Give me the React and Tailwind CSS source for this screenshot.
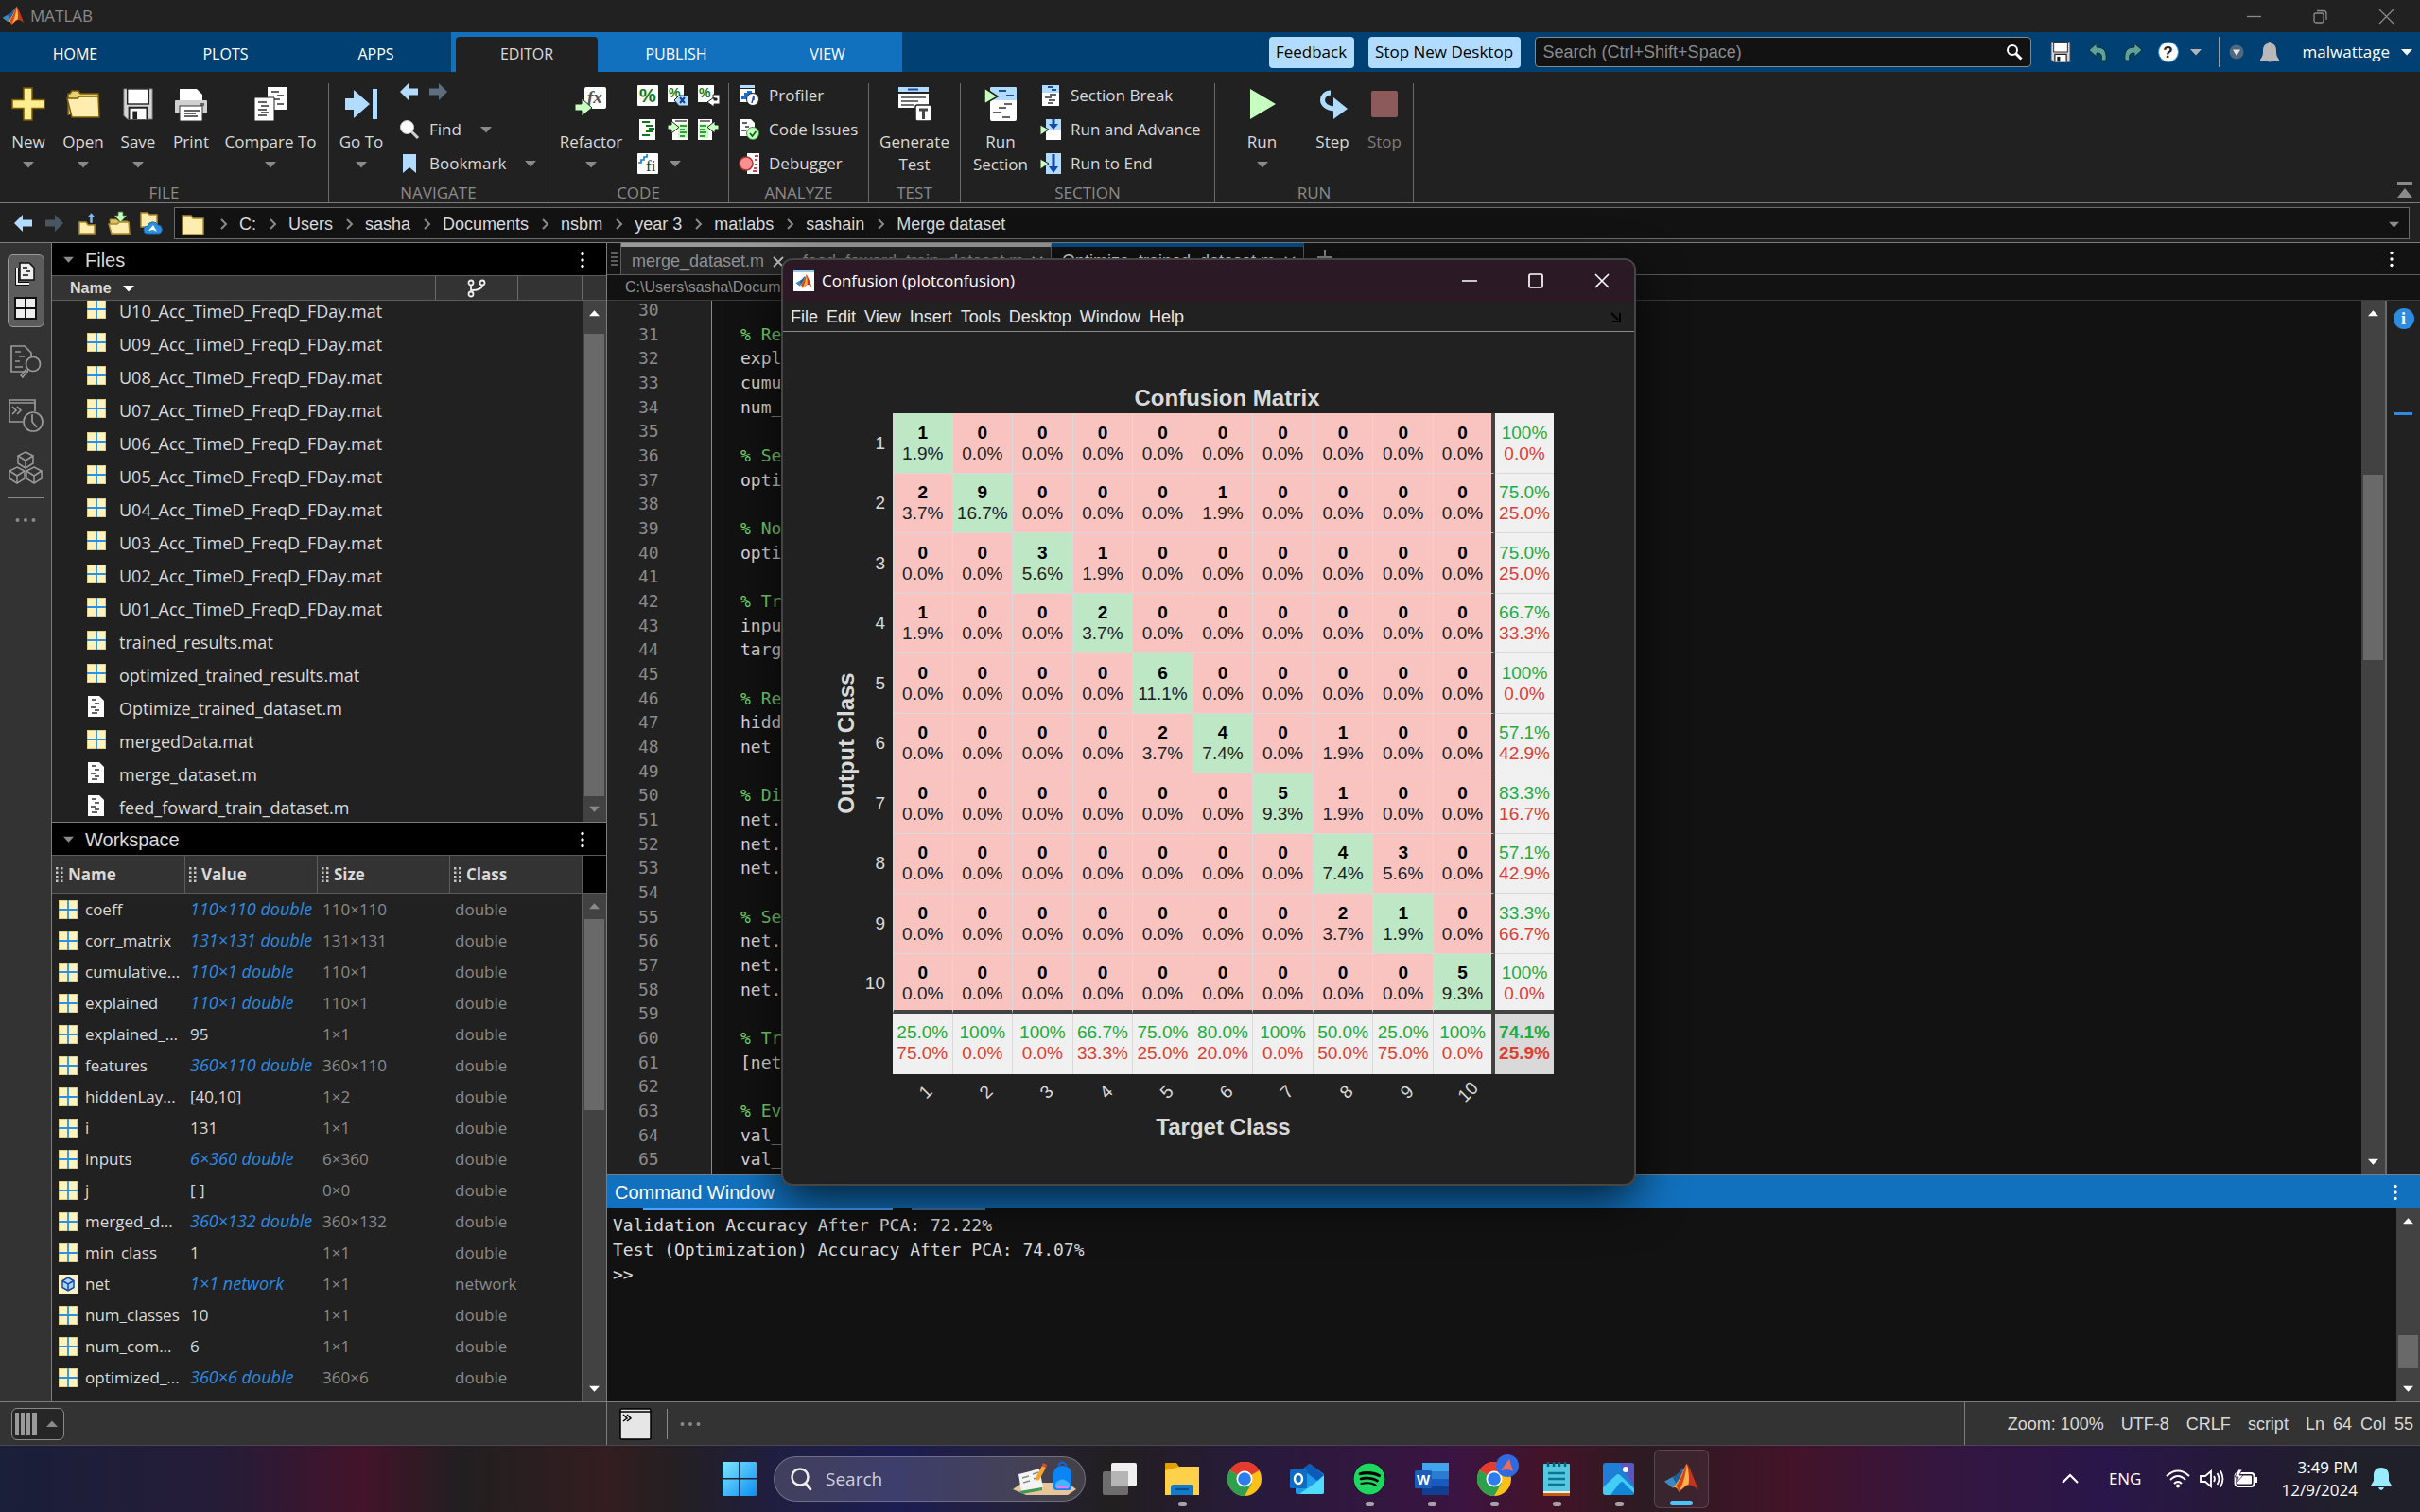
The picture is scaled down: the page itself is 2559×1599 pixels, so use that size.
import React from "react";
import { FaSpotify } from "react-icons/fa";

const FILES = [
  "U10_Acc_TimeD_FreqD_FDay.mat",
  "U09_Acc_TimeD_FreqD_FDay.mat",
  "U08_Acc_TimeD_FreqD_FDay.mat",
  "U07_Acc_TimeD_FreqD_FDay.mat",
  "U06_Acc_TimeD_FreqD_FDay.mat",
  "U05_Acc_TimeD_FreqD_FDay.mat",
  "U04_Acc_TimeD_FreqD_FDay.mat",
  "U03_Acc_TimeD_FreqD_FDay.mat",
  "U02_Acc_TimeD_FreqD_FDay.mat",
  "U01_Acc_TimeD_FreqD_FDay.mat",
  "trained_results.mat",
  "optimized_trained_results.mat",
  "Optimize_trained_dataset.m",
  "mergedData.mat",
  "merge_dataset.m",
  "feed_foward_train_dataset.m",
];

const VARS = [
  ["coeff", "110×110 double", "110×110", "double"],
  ["corr_matrix", "131×131 double", "131×131", "double"],
  ["cumulative...", "110×1 double", "110×1", "double"],
  ["explained", "110×1 double", "110×1", "double"],
  ["explained_...", "95", "1×1", "double"],
  ["features", "360×110 double", "360×110", "double"],
  ["hiddenLay...", "[40,10]", "1×2", "double"],
  ["i", "131", "1×1", "double"],
  ["inputs", "6×360 double", "6×360", "double"],
  ["j", "[ ]", "0×0", "double"],
  ["merged_d...", "360×132 double", "360×132", "double"],
  ["min_class", "1", "1×1", "double"],
  ["net", "1×1 network", "1×1", "network"],
  ["num_classes", "10", "1×1", "double"],
  ["num_com...", "6", "1×1", "double"],
  ["optimized_...", "360×6 double", "360×6", "double"],
];

const CODE = [
  "", "% Re", "expl", "cumu", "num_", "", "% Se", "opti", "", "% No", "opti", "", "% Tr", "inpu", "targ", "",
  "% Re", "hidd", "net", "", "% Di", "net.", "net.", "net.", "", "% Se", "net.", "net.", "net.", "", "% Tr",
  "[net", "", "% Ev", "val_", "val_",
];

const COUNTS = [
  [1, 0, 0, 0, 0, 0, 0, 0, 0, 0],
  [2, 9, 0, 0, 0, 1, 0, 0, 0, 0],
  [0, 0, 3, 1, 0, 0, 0, 0, 0, 0],
  [1, 0, 0, 2, 0, 0, 0, 0, 0, 0],
  [0, 0, 0, 0, 6, 0, 0, 0, 0, 0],
  [0, 0, 0, 0, 2, 4, 0, 1, 0, 0],
  [0, 0, 0, 0, 0, 0, 5, 1, 0, 0],
  [0, 0, 0, 0, 0, 0, 0, 4, 3, 0],
  [0, 0, 0, 0, 0, 0, 0, 2, 1, 0],
  [0, 0, 0, 0, 0, 0, 0, 0, 0, 5],
];
const ROW_STATS = [
  ["100%", "0.0%"], ["75.0%", "25.0%"], ["75.0%", "25.0%"], ["66.7%", "33.3%"], ["100%", "0.0%"],
  ["57.1%", "42.9%"], ["83.3%", "16.7%"], ["57.1%", "42.9%"], ["33.3%", "66.7%"], ["100%", "0.0%"],
];
const COL_STATS = [
  ["25.0%", "75.0%"], ["100%", "0.0%"], ["100%", "0.0%"], ["66.7%", "33.3%"], ["75.0%", "25.0%"],
  ["80.0%", "20.0%"], ["100%", "0.0%"], ["50.0%", "50.0%"], ["25.0%", "75.0%"], ["100%", "0.0%"],
];
const TOTAL = 54;

/* ---------- icons ---------- */

const Svg = ({ w = 24, h = w, vb = `0 0 ${w} ${h}`, children, ...p }) => (
  <svg width={w} height={h} viewBox={vb} fill="none" className="shrink-0 overflow-visible" aria-hidden="true" {...p}>{children}</svg>
);

const Down = ({ c = "#8a8a8a", w = 12 }) => (
  <Svg w={w} h={w} vb="0 0 12 12"><path d="M0 3h12L6 9.500z" fill={c} /></Svg>
);
const Up = ({ c = "#8a8a8a", w = 12 }) => (
  <Svg w={w} h={w} vb="0 0 12 12"><path d="M0 9h12L6 2.500z" fill={c} /></Svg>
);
const Kebab = () => (
  <Svg w={6} h={20}><g fill="#fff"><circle cx="3" cy="3.500" r="1.700" /><circle cx="3" cy="10" r="1.700" /><circle cx="3" cy="16.500" r="1.700" /></g></Svg>
);
const Dots = () => (
  <Svg w={24} h={6}><g fill="#8a8a8a"><circle cx="3.500" cy="3" r="2" /><circle cx="12" cy="3" r="2" /><circle cx="20.500" cy="3" r="2" /></g></Svg>
);

const MatlabLogo = ({ w }) => (
  <Svg w={w} vb="0 0 40 40">
    <path d="M1 23l9-5c4-1 7-4 11-10l3 6-8 15c-2-2-4-1-6 1z" fill="#3b8ac4" />
    <path d="M10 18c4-1 7-4 11-10l2 4-9 13z" fill="#1d5f96" />
    <path d="M10 30c3-1 5-1 7 4 4-2 9-12 9-31-4 6-7 17-13 24z" fill="#f2a33a" />
    <path d="M26 3c-3 6-6 17-12 25 2 2 3 5 3 7 3-2 7-7 10-9z" fill="#d9441f" />
    <path d="M26 3c4 5 8 18 13 29-5-4-8-6-12-5-4 2-7 6-10 7 6-8 8-19 9-31z" fill="#c5351b" />
    <path d="M26 3c2 8 3 15 2 23-4 1-8 6-11 8 5-8 8-19 9-31z" fill="#f7b54c" />
  </Svg>
);

const ArrowL = ({ c = "#b2dcff" }) => (
  <Svg w={22} h={22}><path d="M1 11L10 2v5.500h10v7H10V20z" fill={c} /></Svg>
);
const ArrowR = ({ c = "#b2dcff" }) => (
  <Svg w={22} h={22}><path d="M21 11L12 2v5.500H2v7h10V20z" fill={c} /></Svg>
);

const IcoNew = () => (
  <Svg w={36}><path d="M13 1h9v12.500h13v9H22V35h-9V22.500H1v-9h12z" fill="#ffed91" stroke="#7a5c00" strokeWidth="1.500" /></Svg>
);
const IcoOpen = () => (
  <Svg w={36}><path d="M2 30V7h2l2-3h7l2 3h19v5" fill="#e7cf78" stroke="#7a5c00" strokeWidth="1.500" /><path d="M6 32L1 12h11l2-2h20l1 22z" fill="#ffedb0" stroke="#7a5c00" strokeWidth="1.500" /></Svg>
);
const IcoSave = ({ w = 34 }) => (
  <Svg w={w} vb="0 0 34 36">
    <path d="M1 1h32v34H5l-4-4z" fill="#d5d5d5" stroke="#777" />
    <rect x="5" y="1" width="24" height="17" fill="#fff" stroke="#222" strokeWidth="1.500" />
    <path d="M7 35V22h20v13" fill="#fff" stroke="#222" strokeWidth="2" /><rect x="11" y="26" width="5" height="9" fill="#222" />
  </Svg>
);
const IcoPrint = () => (
  <Svg w={36}><path d="M6 2h18l6 6v8H6z" fill="#fff" /><rect x="1" y="14" width="34" height="14" rx="1" fill="#d0d0d0" /><rect x="27" y="17" width="5" height="3" fill="#666" />
    <rect x="6" y="20" width="24" height="16" fill="#fff" stroke="#333" /><path d="M11 25h16M11 28h12M11 31h14" stroke="#333" strokeWidth="1.500" /></Svg>
);
const IcoCompare = () => (
  <Svg w={36}><path d="M15 0h20v24H15z" fill="#fff" /><path d="M19 5h8M25 9h7M22 13h6M25 18h7" stroke="#333" strokeWidth="1.500" /><path d="M1 11h21v25H1z" fill="#fff" stroke="#222" /><path d="M5 16h9M8 20h8M5 24h9M5 30h9M8 27h8" stroke="#333" strokeWidth="1.500" /></Svg>
);
const IcoGoTo = () => (
  <Svg w={36}><path d="M1 12h9V3l17 15-17 15v-9H1z" fill="#b2dcff" /><rect x="30" y="2" width="5" height="32" fill="#b2dcff" /></Svg>
);
const IcoFind = () => (
  <Svg w={22}><path d="M13 13l7 7" stroke="#cfcfcf" strokeWidth="3" /><circle cx="8.500" cy="8.500" r="7" fill="#fff" stroke="#ccc" /></Svg>
);
const IcoBookmark = () => (
  <Svg w={22}><path d="M4 1h14v20l-7-6-7 6z" fill="#b2dcff" /></Svg>
);
const serif = "'Liberation Serif', serif";
const IcoRefactor = () => (
  <Svg w={36}><rect x="11" y="0" width="23" height="23" rx="2" fill="#fff" /><text x="14" y="17" fontFamily={serif} fontStyle="italic" fontWeight="bold" fontSize="19" fill="#555">fx</text><path d="M1 18h7v-6l11 10-11 9v-6H1z" fill="#c6ffc0" stroke="#222" /></Svg>
);
const pct = "'Liberation Sans', sans-serif";
const IcoPct = () => (
  <Svg w={22}><rect width="22" height="22" rx="1" fill="#fff" /><text x="2" y="18" fontFamily={pct} fontWeight="bold" fontSize="20" fill="#0b7a16">%</text></Svg>
);
const IcoPctX = () => (
  <Svg w={22}><rect width="17" height="18" fill="#fff" /><text x="1" y="13" fontFamily={pct} fontWeight="bold" fontSize="14" fill="#0b7a16">%</text><path d="M7 16l5-5h10v11H12z" fill="#b2dcff" stroke="#222" /><path d="M13 13l5 6M18 13l-5 6" stroke="#123f9c" strokeWidth="2" /></Svg>
);
const IcoPctWrap = () => (
  <Svg w={24} h={22}><rect width="17" height="18" fill="#fff" /><text x="1" y="13" fontFamily={pct} fontWeight="bold" fontSize="14" fill="#0b7a16">%</text><path d="M16 10h7v10h-6v3l-7-5 7-5v3h3v-2h-4z" fill="#fff" stroke="#222" /></Svg>
);
const IcoSmart = () => (
  <Svg w={22}><rect x="2" width="17" height="22" fill="#fff" /><path d="M5 3h8M9 7h7M12 10h6M9 13h7M5 17h8" stroke="#0b7a16" strokeWidth="2" /></Svg>
);
const IcoIndent = () => (
  <Svg w={22}><path d="M5 0h17v22H5z" fill="#fff" /><path d="M8 2h12" stroke="#777" strokeWidth="2" /><rect x="11" y="5" width="10" height="15" fill="#c6ffc0" /><path d="M13 7h7M13 11h5M13 14h7M13 18h5" stroke="#0b7a16" strokeWidth="1.500" /><path d="M0 6h4V2l8 6.500L4 15v-4H0z" fill="#c6ffc0" stroke="#222" /></Svg>
);
const IcoOutdent = () => (
  <Svg w={22}><path d="M0 0h15v22H0z" fill="#fff" /><path d="M2 2h11" stroke="#777" strokeWidth="2" /><rect x="1" y="5" width="10" height="15" fill="#c6ffc0" /><path d="M2 7h7M2 11h5M2 14h7M2 18h5" stroke="#0b7a16" strokeWidth="1.500" /><path d="M22 6h-4V2l-8 6.500 8 6.500v-4h4z" fill="#c6ffc0" stroke="#222" /></Svg>
);
const IcoFi = () => (
  <Svg w={22}><rect width="22" height="22" rx="1" fill="#fff" /><path d="M1 10h3V7h3V4h3V1" stroke="#1a7fd6" strokeWidth="1.700" /><text x="9" y="19" fontFamily={serif} fontSize="17" fill="#333">fi</text></Svg>
);
const IcoProfiler = () => (
  <Svg w={22}><path d="M1 4h16v14H1z" fill="#fff" /><rect x="1" y="0" width="16" height="3" fill="#b2dcff" /><path d="M3 15V11h3V8h3V6h5v9z" fill="#1d70c9" /><circle cx="15" cy="15" r="6.500" fill="#fff" stroke="#222" /><path d="M14 19l2-8v5" stroke="#1d4f9c" strokeWidth="1.500" /></Svg>
);
const IcoIssues = () => (
  <Svg w={22}><path d="M1 0h12l4 4v14H1z" fill="#fff" /><path d="M4 4h5M7 8h4M3 12h5" stroke="#333" strokeWidth="1.500" /><circle cx="15" cy="15" r="6.500" fill="#c6ffc0" stroke="#3f9a48" /><path d="M12 15l2.500 3 4-5" stroke="#0b6a16" strokeWidth="1.800" /></Svg>
);
const IcoDebug = () => (
  <Svg w={22}><rect x="9" y="0" width="13" height="22" fill="#fff" /><path d="M17 3h4M17 7h3M17 12h3M16 16h4M15 19h5" stroke="#a12" strokeWidth="1.500" /><circle cx="8" cy="11" r="7" fill="#ff8f8f" stroke="#a33" strokeWidth="1.500" /></Svg>
);
const IcoTest = () => (
  <Svg w={36}><rect x="1" y="0" width="32" height="5" fill="#b2dcff" /><path d="M11 2.500h11" stroke="#1d4f9c" strokeWidth="2" /><rect x="1" y="7" width="32" height="15" fill="#fff" /><path d="M4 11h26M4 15h18M4 19h13" stroke="#444" strokeWidth="1.500" /><rect x="19" y="19" width="17" height="17" rx="2" fill="#fff" stroke="#222" strokeWidth="1.500" /><path d="M23 24h9M27.500 24v10" stroke="#444" strokeWidth="3" /></Svg>
);
const IcoRunSection = () => (
  <Svg w={36}><rect x="7" y="0" width="28" height="36" rx="2" fill="#fff" /><path d="M7 2q0-2 2-2h24q2 0 2 2v12H7z" fill="#b2dcff" /><path d="M16 4h8M24 9h8" stroke="#1d4f9c" strokeWidth="2" /><path d="M22 18h8M16 22h8M10 27h9M20 32h8" stroke="#333" strokeWidth="1.500" /><path d="M1 1l14 9L1 18z" fill="#c6ffc0" stroke="#222" strokeWidth="1.500" /></Svg>
);
const IcoBreak = () => (
  <Svg w={22}><rect x="2" width="18" height="22" fill="#fff" /><rect x="2" width="18" height="8" fill="#b2dcff" /><path d="M8 2h5M12 5h5" stroke="#1d4f9c" strokeWidth="1.800" /><path d="M10 10h7M5 13h7M9 16h7M8 19h6" stroke="#333" strokeWidth="1.400" /></Svg>
);
const IcoAdvance = () => (
  <Svg w={22}><rect x="6" width="16" height="22" fill="#fff" /><rect x="6" width="16" height="11" fill="#b2dcff" /><path d="M14 0v6" stroke="#1549a8" strokeWidth="3" /><path d="M9 5h10l-5 6z" fill="#1549a8" /><path d="M0 6l9 5-9 6z" fill="#c6ffc0" stroke="#222" /></Svg>
);
const IcoRunEnd = () => (
  <Svg w={22}><rect x="6" width="16" height="22" fill="#b2dcff" /><path d="M14 1v14" stroke="#1549a8" strokeWidth="3" /><path d="M9 14h10l-5 7z" fill="#1549a8" /><path d="M0 6l9 5-9 6z" fill="#c6ffc0" stroke="#222" /></Svg>
);
const IcoRun = () => <Svg w={36}><path d="M5 2l27 16L5 34z" fill="#c6ffc0" /></Svg>;
const IcoStep = () => (
  <Svg w={36}><path d="M16 6C6 6 2 21 20 23" stroke="#b2dcff" strokeWidth="5" /><path d="M19 11l15 12-15 11z" fill="#b2dcff" /></Svg>
);
const IcoStop = () => <Svg w={36}><rect x="4" y="4" width="28" height="28" rx="2" fill="#8c5a5a" /></Svg>;

const MatFile = ({ w = 20 }) => (
  <Svg w={w} vb="0 0 20 20"><rect width="20" height="20" fill="#fff3c0" /><rect x=".5" y=".5" width="19" height="19" stroke="#e5cf80" /><path d="M10 0v20M0 10h20" stroke="#2d8fe0" strokeWidth="1.800" /></Svg>
);
const MFile = () => (
  <Svg w={20} h={22}><path d="M1 0h12l5 5v17H1z" fill="#fff" /><path d="M5 4h5M8 8h5M4 12h5M8 15h5M5 18h6" stroke="#333" strokeWidth="1.500" /></Svg>
);
const NetIcon = () => (
  <Svg w={20}><rect width="20" height="20" fill="#fff3c0" /><path d="M10 3l6 3.500v7L10 17l-6-3.500v-7z" fill="#a9d4ff" stroke="#1549a8" strokeWidth="1.500" /><path d="M4 6.500l6 3.500 6-3.500M10 10v7" stroke="#1549a8" strokeWidth="1.500" /></Svg>
);
const Folder = ({ w = 24 }) => (
  <Svg w={w} vb="0 0 24 24"><path d="M1 3h9l2 3h11v17H1z" fill="#ffedb0" stroke="#a88a2e" strokeWidth="1.500" /></Svg>
);
const FolderUp = () => (
  <Svg w={24}><path d="M4 11h7l2 3h7v9H4z" fill="#ffedb0" stroke="#a88a2e" strokeWidth="1.500" /><path d="M15 12V6h-3l4.500-5L21 6h-3v6z" fill="#7dbcf5" stroke="#222" strokeWidth=".5" /></Svg>
);
const FolderDown = () => (
  <Svg w={24}><path d="M2 8h7l2 2h10v13H4z" fill="#d9bf66" stroke="#a88a2e" /><path d="M1 13h9l2-2h10l1 12H4z" fill="#ffedb0" stroke="#a88a2e" strokeWidth="1.500" /><path d="M11 0h5v4h4l-6.500 7L7 4h4z" fill="#c6ffc0" stroke="#3a7a3a" strokeWidth=".8" /></Svg>
);
const FolderCloud = () => (
  <Svg w={24}><path d="M1 1h7l2 2h8v13H1z" fill="#ffedb0" stroke="#a88a2e" strokeWidth="1.500" /><path d="M8 23a4 4 0 010-8 6 6 0 0111-1 4.600 4.600 0 011 9z" fill="#2d8fe0" stroke="#1b6bb0" /><path d="M9 20l5-6 4 7-4-2z" fill="#fff" /></Svg>
);

/* ---------- ribbon ---------- */

const Big = ({ icon, l1, l2, arrow, width, dim }) => (
  <button className={`flex flex-col items-center pt-[9px] ${width} ${dim ? "text-[#7d7d7d]" : ""}`}>
    <span className="flex h-9 items-center">{icon}</span>
    <span className="mt-2.5 h-6 leading-6">{l1}</span>
    {l2 ? <span className="h-6 leading-6">{l2}</span> : null}
    {arrow ? <span className="flex h-6 items-center"><Down /></span> : null}
  </button>
);
const Small = ({ icon, label, arrow, gap = "gap-4" }) => (
  <button className={`flex h-9 items-center whitespace-nowrap ${gap}`}>
    <span className="flex items-center gap-2.5">{icon}<span>{label}</span></span>
    {arrow ? <Down /> : null}
  </button>
);
const Group = ({ name, width, children }) => (
  <section className={`flex shrink-0 ${width}`} aria-label={name}>
    <div className="flex min-w-0 flex-1 flex-col">
      <div className="flex h-[118px] pt-[7px]">{children}</div>
      <div className="h-5 text-center leading-5 text-[#8a8a8a]">{name}</div>
    </div>
    <div className="mt-3 w-px bg-[#6a6a6a]" />
  </section>
);

const Ribbon = () => (
  <div className="flex h-[139px] shrink-0 items-stretch border-b border-[#7d7d7d] text-[17px]">
    <Group name="FILE" width="w-[348px]">
      <Big icon={<IcoNew />} l1="New" arrow width="w-[60px]" />
      <Big icon={<IcoOpen />} l1="Open" arrow width="w-[56px]" />
      <Big icon={<IcoSave />} l1="Save" arrow width="w-[60px]" />
      <Big icon={<IcoPrint />} l1="Print" width="w-[52px]" />
      <Big icon={<IcoCompare />} l1="Compare To" arrow width="w-[116px]" />
    </Group>
    <Group name="NAVIGATE" width="w-[232px]">
      <Big icon={<IcoGoTo />} l1="Go To" arrow width="w-[68px]" />
      <div className="flex flex-col pl-1.5">
        <div className="flex h-9 items-start gap-2 pt-[3px]"><button aria-label="Back"><ArrowL /></button><button aria-label="Forward"><ArrowR c="#5d6f7f" /></button></div>
        <Small icon={<IcoFind />} label="Find" arrow gap="gap-5" />
        <Small icon={<IcoBookmark />} label="Bookmark" arrow gap="gap-5" />
      </div>
    </Group>
    <Group name="CODE" width="w-[191px]">
      <Big icon={<IcoRefactor />} l1="Refactor" arrow width="w-[90px]" />
      <div className="grid h-[108px] grid-cols-[32px_32px_32px] grid-rows-3 items-center pl-1">
        <button aria-label="Comment"><IcoPct /></button><button aria-label="Uncomment"><IcoPctX /></button><button aria-label="Wrap comments"><IcoPctWrap /></button>
        <button aria-label="Smart indent"><IcoSmart /></button><button aria-label="Indent"><IcoIndent /></button><button aria-label="Outdent"><IcoOutdent /></button>
        <button aria-label="Fixed point"><IcoFi /></button><button aria-label="More code tools" className="pl-0.5"><Down /></button>
      </div>
    </Group>
    <Group name="ANALYZE" width="w-[148px]">
      <div className="flex flex-col pl-2.5">
        <Small icon={<IcoProfiler />} label="Profiler" />
        <Small icon={<IcoIssues />} label="Code Issues" />
        <Small icon={<IcoDebug />} label="Debugger" />
      </div>
    </Group>
    <Group name="TEST" width="w-[97px]">
      <Big icon={<IcoTest />} l1="Generate" l2="Test" width="w-full" />
    </Group>
    <Group name="SECTION" width="w-[269px]">
      <Big icon={<IcoRunSection />} l1="Run" l2="Section" width="w-[84px]" />
      <div className="flex flex-col">
        <Small icon={<IcoBreak />} label="Section Break" />
        <Small icon={<IcoAdvance />} label="Run and Advance" />
        <Small icon={<IcoRunEnd />} label="Run to End" />
      </div>
    </Group>
    <Group name="RUN" width="w-[210px]">
      <Big icon={<IcoRun />} l1="Run" arrow width="w-[99px]" />
      <Big icon={<IcoStep />} l1="Step" width="w-[50px]" />
      <Big icon={<IcoStop />} l1="Stop" dim width="w-[60px]" />
    </Group>
    <button aria-label="Minimize toolstrip" className="mt-auto mr-2 mb-1 ml-auto">
      <Svg w={16} h={18}><rect y="1" width="16" height="3" fill="#8a8a8a" /><path d="M0 17L8 7l8 10z" fill="#8a8a8a" /></Svg>
    </button>
  </div>
);

const TabBar = () => (
  <header className="flex h-[42px] shrink-0 bg-[#004073] text-[16px] text-white">
    <nav className="flex">
      <button className="w-[159px] pt-1">HOME</button>
      <button className="w-[159px] pt-1">PLOTS</button>
      <button className="w-[159px] pt-1">APPS</button>
      <div className="flex bg-[#1171be] pl-[5px]">
        <button className="mt-[5px] w-[150px] rounded-t bg-[#212121] pb-0.5 text-[#d9d9d9]">EDITOR</button>
        <button className="w-[166px] pt-1">PUBLISH</button>
        <button className="w-[156px] pt-1 pr-0.5">VIEW</button>
      </div>
    </nav>
    <div className="ml-auto flex items-center">
      <button className="h-[33px] w-[90px] rounded-sm bg-[#b2dcff] text-[17px] text-black">Feedback</button>
      <button className="ml-[15px] h-[33px] w-[161px] rounded-sm bg-[#b2dcff] text-[17px] text-black">Stop New Desktop</button>
      <label className="ml-[15px] flex h-8 w-[525px] items-center rounded border border-[#8a8a8a] bg-[#121212] pr-2">
        <input aria-label="Search" placeholder="Search (Ctrl+Shift+Space)" className="min-w-0 flex-1 bg-transparent pl-2 font-['Liberation_Sans',sans-serif] text-[18px] placeholder-[#8a8a8a] outline-none" />
        <Svg w={18}><circle cx="7" cy="7" r="5" stroke="#fff" strokeWidth="2" /><path d="M10.500 10.500l6 6" stroke="#fff" strokeWidth="3" /></Svg>
      </label>
      <button aria-label="Save" className="ml-5"><IcoSave w={22} /></button>
      <button aria-label="Undo" className="ml-[18px]"><Svg w={22}><path d="M1 9l8-7v4c8 0 11 4 10 14h-5c1-6 0-8-5-8v4z" fill="#62a19a" stroke="#033" /></Svg></button>
      <button aria-label="Redo" className="ml-3.5"><Svg w={22}><path d="M21 9l-8-7v4c-8 0-11 4-10 14h5c-1-6 0-8 5-8v4z" fill="#62a19a" stroke="#033" /></Svg></button>
      <button aria-label="Help" className="ml-4 flex items-center gap-3">
        <span className="flex h-[22px] w-[22px] items-center justify-center rounded-full border border-[#2d8fe0] bg-white font-['Liberation_Sans',sans-serif] text-[17px] leading-none font-bold text-[#222]">?</span>
        <Down c="#b5b5b5" />
      </button>
      <div className="ml-[18px] h-8 w-px bg-[#9a9a9a]" />
      <button aria-label="Status" className="ml-2.5"><Svg w={16}><circle cx="8" cy="8" r="7.500" fill="#51697f" /><path d="M4 5.500h8L8 12z" fill="#e8e8e8" /></Svg></button>
      <button aria-label="Notifications" className="ml-4"><Svg w={22}><path d="M11 0c1.500 0 2 1 2 2 4 1 5 4 5 8 0 5 1 6 3 9v1H1v-1c2-3 3-4 3-9 0-4 1-7 5-8 0-1 .5-2 2-2z" fill="#b9b9b9" /><path d="M8 20h6l-3 2z" fill="#999" /></Svg></button>
      <button className="mr-2 ml-6 flex items-center gap-3 text-[17px]">malwattage<Down c="#fff" /></button>
    </div>
  </header>
);

const CRUMBS = ["C:", "Users", "sasha", "Documents", "nsbm", "year 3", "matlabs", "sashain", "Merge dataset"];
const AddressBar = () => (
  <div className="flex h-[41px] shrink-0 items-end pr-[11px] pb-[3px] pl-3.5">
    <div className="flex h-[34px] items-center">
      <button aria-label="Back"><ArrowL /></button>
      <button aria-label="Forward" className="ml-2.5"><ArrowR c="#4a5560" /></button>
      <div className="ml-3 flex gap-2.5">
        <button aria-label="Up one folder"><FolderUp /></button>
        <button aria-label="Browse"><FolderDown /></button>
        <button aria-label="Cloud folder"><FolderCloud /></button>
      </div>
    </div>
    <nav aria-label="Current folder" className="ml-3 flex h-[34px] min-w-0 flex-1 items-center border border-[#6a6a6a] bg-[#121212] pt-0.5 pr-2.5 pl-[7px] font-['Liberation_Sans',sans-serif] text-[18px]">
      <Folder />
      {CRUMBS.map((c, i) => (
        <React.Fragment key={c}>
          <span className={i === 0 ? "ml-4" : "ml-[13px]"}><Svg w={10} h={12}><path d="M2 1l5 5-5 5" stroke="#8a8a8a" strokeWidth="2" /></Svg></span>
          <a href="#folder" className="ml-[11px] whitespace-nowrap">{c}</a>
        </React.Fragment>
      ))}
      <button aria-label="Folder history" className="ml-auto"><Down w={11} /></button>
    </nav>
  </div>
);

/* ---------- left side ---------- */

const Rail = () => (
  <aside className="flex w-[54px] shrink-0 flex-col items-center bg-[#333] pt-3">
    <div className="flex h-[77px] w-[39px] flex-col items-center justify-around rounded-md border border-[#9a9a9a] bg-[#5c5c5c]">
      <button aria-label="Files"><Svg w={24}><path d="M3 6v17h13" stroke="#111" strokeWidth="4" /><path d="M3 6v17h13" stroke="#eee" strokeWidth="2" /><path d="M6 1h10l5 5v13H6z" fill="#eee" stroke="#111" strokeWidth="1.500" /><path d="M9 6h5M12 10h5M9 14h6" stroke="#111" strokeWidth="1.700" /></Svg></button>
      <button aria-label="Workspace"><Svg w={24}><rect x="1" y="1" width="22" height="22" fill="#eee" stroke="#111" strokeWidth="2" /><path d="M12 1v22M1 12h22" stroke="#111" strokeWidth="2" /></Svg></button>
    </div>
    <button aria-label="Find files" className="mt-[18px]"><Svg w={36}><path d="M21 29H3V2h14l7 7v5" stroke="#999" strokeWidth="1.700" /><path d="M7 8h6M11 13h6M7 18h5M7 24h8" stroke="#999" strokeWidth="1.700" /><circle cx="26" cy="21" r="7.500" stroke="#999" strokeWidth="1.700" /><path d="M21 27l-6 8-2-2 6-7" stroke="#999" strokeWidth="1.500" /></Svg></button>
    <button aria-label="Command history" className="mt-5"><Svg w={38}><path d="M16 26H2V3h27v12M2 6h27" stroke="#999" strokeWidth="1.700" /><path d="M5 10l4 4-4 4M10 10l4 4-4 4" stroke="#999" strokeWidth="1.700" /><circle cx="27" cy="26" r="10" stroke="#999" strokeWidth="1.700" /><path d="M26 18v8l5 6" stroke="#999" strokeWidth="1.700" /></Svg></button>
    <button aria-label="Add-ons" className="mt-[18px]"><Svg w={38} h={36}>
      {[[19, 10], [10, 26], [28, 26]].map(([x, y]) => (
        <g key={x} stroke="#999" strokeWidth="1.500"><path d={`M${x} ${y - 8}l8 4v8l-8 5-8-5v-8z`} /><path d={`M${x - 8} ${y - 4}l8 5 8-5M${x} ${y + 1}v8`} /></g>
      ))}
    </Svg></button>
    <div className="mt-3.5 h-px w-[39px] bg-[#8a8a8a]" />
    <button aria-label="More panels" className="mt-5"><Dots /></button>
  </aside>
);

const PanelHead = ({ title }) => (
  <div className="flex h-[34px] shrink-0 items-center bg-black px-3 pt-px font-['Liberation_Sans',sans-serif] text-[20px]">
    <Down w={11} />
    <h2 className="ml-3">{title}</h2>
    <button aria-label={`${title} menu`} className="mr-2.5 ml-auto"><Kebab /></button>
  </div>
);

const VBar = ({ upC = "#fff", downC = "#fff", children }) => (
  <div className="flex w-[25px] shrink-0 flex-col items-center bg-[#424242]" aria-hidden="true">
    <div className="py-2"><Up c={upC} w={11} /></div>
    <div className="flex w-full flex-1 flex-col px-[2px]">{children}</div>
    <div className="py-2"><Down c={downC} w={11} /></div>
  </div>
);

const FilesPanel = () => (
  <section className="flex min-h-0 flex-1 flex-col">
    <PanelHead title="Files" />
    <div className="flex h-[27px] shrink-0 border-y border-[#5c5c5c] bg-[#333] text-[16px] font-bold">
      <button className="flex flex-1 items-center gap-3 pl-[19px] font-['Liberation_Sans',sans-serif]">Name<Down c="#fff" /></button>
      <div className="flex w-[87px] items-center justify-center border-l border-[#6a6a6a]">
        <Svg w={20}><g stroke="#eee" strokeWidth="1.800"><circle cx="4" cy="4" r="2.500" /><circle cx="16" cy="4" r="2.500" /><circle cx="4" cy="16" r="2.500" /><path d="M4 7v7M4 12c7 0 12-1 12-6" /></g></Svg>
      </div>
      <div className="w-[68px] border-l border-[#6a6a6a]" /><div className="w-[26px] border-l border-[#6a6a6a]" />
    </div>
    <div className="flex min-h-0 flex-1">
      <div className="min-w-0 flex-1 overflow-hidden">
        <ul className="-mt-1.5 text-[18px]">
          {FILES.map((f) => (
            <li key={f} className="flex h-[35px] items-center gap-3.5 pl-[37px]">
              <span className="pb-1.5">{f.endsWith(".mat") ? <MatFile /> : <MFile />}</span>
              <a href="#file">{f}</a>
            </li>
          ))}
        </ul>
      </div>
      <VBar downC="#8a8a8a"><div className="mt-2 flex-1 bg-[#696969]" /></VBar>
    </div>
  </section>
);

const Grip = () => (
  <Svg w={9} h={16}><g fill="#c5c5c5">{[0, 4.500, 9, 13.500].map((y) => <React.Fragment key={y}><rect y={y} width="2.500" height="2.500" /><rect x="5" y={y} width="2.500" height="2.500" /></React.Fragment>)}</g></Svg>
);

const WorkspacePanel = () => (
  <section className="flex min-h-0 flex-1 flex-col border-t border-[#7d7d7d]">
    <PanelHead title="Workspace" />
    <div className="flex min-h-0 flex-1">
      <div className="min-w-0 flex-1 overflow-hidden border-r border-[#5c5c5c]">
        <table className="w-full table-fixed border-separate border-spacing-0 text-left text-[17px] whitespace-nowrap">
          <thead>
            <tr className="h-[41px] bg-[#333]">
              {["Name", "Value", "Size", "Class"].map((h) => (
                <th key={h} className="border-y border-l border-[#5c5c5c] p-0 pl-1 font-bold first:border-l-0">
                  <span className="flex items-center gap-1"><Grip />{h}</span>
                </th>
              ))}
            </tr>
          </thead>
          <tbody>
            {VARS.map(([n, v, s, c]) => (
              <tr key={n} className="h-[33px] text-[#8a8a8a]">
                <td className="p-0 pl-[7px] text-[#d9d9d9]"><span className="flex items-center gap-2">{n === "net" ? <NetIcon /> : <MatFile />}{n}</span></td>
                <td className={v.includes("×") ? "p-0 pl-1.5 text-[18px] text-[#2d8be0] italic" : "p-0 pl-1.5 text-[#d9d9d9]"}>{v}</td>
                <td className="p-0 pl-1.5">{s}</td>
                <td className="p-0 pl-1.5">{c}</td>
              </tr>
            ))}
          </tbody>
        </table>
      </div>
      <div className="flex flex-col">
        <div className="h-[41px] shrink-0 border-y border-[#5c5c5c] bg-black" />
        <div className="flex min-h-0 flex-1"><VBar upC="#8a8a8a"><div className="h-[202px] bg-[#696969]" /></VBar></div>
      </div>
    </div>
  </section>
);

/* ---------- editor and command window ---------- */

const CloseX = () => <Svg w={12}><path d="M1 1l10 10M11 1L1 11" stroke="currentColor" strokeWidth="1.800" /></Svg>;
const EditorTab = ({ name, width, active }) => (
  <button className={`flex items-center border-t-4 border-r border-r-[#5c5c5c] pt-0.5 pl-[11px] whitespace-nowrap ${width} ${active ? "border-t-[#004d87] bg-[#121212] text-[#d9d9d9]" : "border-t-[#9a9a9a] bg-[#262626] text-[#8f8f8f]"}`}>
    {name}<span className="mr-2 ml-auto text-[#c5c5c5]"><CloseX /></span>
  </button>
);

const Editor = () => (
  <section className="flex min-h-0 flex-1 flex-col bg-[#121212]" aria-label="Editor">
    <div className="flex h-[34px] shrink-0 border-b border-[#5c5c5c] font-['Liberation_Sans',sans-serif] text-[18px]">
      <div className="flex w-[15px] items-center justify-center border-r border-[#5c5c5c]"><Svg w={7} h={14}><path d="M0 1h7M0 5h7M0 9h7M0 13h7" stroke="#aaa" /></Svg></div>
      <EditorTab name="merge_dataset.m" width="w-[181px]" />
      <EditorTab name="feed_foward_train_dataset.m" width="w-[274px]" />
      <EditorTab name="Optimize_trained_dataset.m" width="w-[267px]" active />
      <button aria-label="New tab" className="ml-3.5 pb-1"><Svg w={16}><path d="M8 0v16M0 8h16" stroke="#8a8a8a" strokeWidth="2" /></Svg></button>
      <button aria-label="Editor menu" className="mr-[27px] ml-auto"><Kebab /></button>
    </div>
    <div className="flex h-[27px] shrink-0 items-center border-b border-[#3c3c3c] pl-[19px] font-['Liberation_Sans',sans-serif] text-[16px] text-[#8f8f8f]">C:\Users\sasha\Docum</div>
    <div className="flex min-h-0 flex-1">
      <div className="flex flex-1 overflow-hidden bg-[linear-gradient(to_right,#212121_110px,#8a8a8a_110px,#8a8a8a_111px,#121212_111px)]">
        <ol className="-mt-[3px] flex flex-1 flex-col pb-[3px] font-['DejaVu_Sans_Mono',monospace] text-[18px]">
          {CODE.map((t, i) => (
            <li key={i} className="flex min-h-0 flex-1 items-center leading-5">
              <span className="w-[111px] pl-[33px] text-[#8a8a8a]">{i + 30}</span>
              <span className={`pl-[30px] whitespace-pre ${t.startsWith("%") ? "text-[#7ad66f]" : "text-[#d9d9d9]"}`}>{t}</span>
            </li>
          ))}
        </ol>
      </div>
      <VBar><div className="mt-[157px] h-[196px] bg-[#696969]" /></VBar>
      <div className="flex w-[37px] flex-col items-center border-l-2 border-[#6a6a6a] bg-[#212121] pt-2">
        <button aria-label="Information" className="flex h-[22px] w-[22px] items-center justify-center rounded-full bg-[#2d8be0] font-['Liberation_Serif',serif] text-[18px] leading-none font-bold text-white">i</button>
        <div className="mt-[88px] h-[3px] w-[19px] bg-[#2d8be0]" />
      </div>
    </div>
  </section>
);

const CommandWindow = () => (
  <section className="flex h-[240px] shrink-0 flex-col bg-[#121212]">
    <div className="flex h-9 shrink-0 items-center border-y border-[#7d7d7d] bg-[#1171be] pt-px pl-2 font-['Liberation_Sans',sans-serif] text-[20px] text-white">
      <h2>Command Window</h2>
      <button aria-label="Command Window menu" className="mr-[23px] ml-auto"><Kebab /></button>
    </div>
    <div className="flex min-h-0 flex-1">
      <div className="flex-1 pl-1.5 font-['DejaVu_Sans_Mono',monospace] text-[18px] leading-[26px]">
        <div className="mb-[3px] flex gap-5 pl-8"><div className="h-0.5 w-[264px] bg-[#4da3ff]" /><div className="h-0.5 w-[78px] bg-[#4078a8]" /></div>
        <p>Validation Accuracy After PCA: 72.22%</p>
        <p>Test (Optimization) Accuracy After PCA: 74.07%</p>
        <p>&gt;&gt;</p>
      </div>
      <VBar><div className="mt-auto mb-2 h-[35px] bg-[#696969]" /></VBar>
    </div>
  </section>
);

/* ---------- plot window ---------- */

const Pair = ({ a, b, strong }) => (
  <div className={`text-center leading-[22px] ${strong ? "font-bold" : ""}`}>
    <div className="text-[#22ac3c]">{a}</div><div className="text-[#e23d32]">{b}</div>
  </div>
);

const Matrix = () => (
  <table className="w-[734px] table-fixed border-separate border-spacing-0 font-['Liberation_Sans',sans-serif] text-[19px] text-black">
    <caption className="pb-0.5 pl-[43px] text-[24px] leading-7 font-bold text-[#d9d9d9]">Confusion Matrix</caption>
    <colgroup>
      <col className="w-[35px]" />
      {COUNTS.map((_, i) => <col key={i} className={i === 9 ? "w-[65px]" : ""} />)}
      <col className="w-[62px]" />
    </colgroup>
    <tbody>
      {COUNTS.map((row, r) => (
        <tr key={r} className={r % 2 === 0 ? "h-16" : "h-[63px]"}>
          <th scope="row" className="p-0 pr-2 text-right text-[19px] font-normal text-[#d9d9d9]">{r + 1}</th>
          {row.map((n, c) => (
            <td key={c} className={`p-0 text-center leading-[22px] ${c === 0 ? "border-l border-l-[#d9d9d9]" : ""} ${r === c ? "bg-[#bde7c5]" : "bg-[#f9c4c0]"} ${c === 9 ? "border-r-4 border-r-[#424242]" : "border-r border-r-[#d9d9d9]"} ${r === 9 ? "border-b-4 border-b-[#424242] pt-0.5" : "border-b border-b-[#d9d9d9]"}`}>
              <div className="font-bold">{n}</div>
              <div className="text-[#222]">{((n / TOTAL) * 100).toFixed(1)}%</div>
            </td>
          ))}
          <td className={`bg-[#f0f0f0] p-0 ${r === 9 ? "border-b-4 border-b-[#424242] pt-0.5" : "border-b border-b-[#d9d9d9]"}`}><Pair a={ROW_STATS[r][0]} b={ROW_STATS[r][1]} /></td>
        </tr>
      ))}
      <tr className="h-16">
        <th className="p-0" />
        {COL_STATS.map(([a, b], c) => (
          <td key={c} className={`bg-[#f0f0f0] p-0 pb-0.5 ${c === 9 ? "border-r-4 border-r-[#424242]" : "border-r border-r-[#d9d9d9]"}`}><Pair a={a} b={b} /></td>
        ))}
        <td className="bg-[#d9d9d9] p-0 pb-0.5"><Pair a="74.1%" b="25.9%" strong /></td>
      </tr>
      <tr className="h-10">
        <th className="p-0" />
        {COUNTS.map((_, c) => (
          <th key={c} scope="col" className="p-0 pb-0.5 pl-2 font-normal text-[#d9d9d9]"><span className="inline-block -rotate-45">{c + 1}</span></th>
        ))}
        <th className="p-0" />
      </tr>
    </tbody>
  </table>
);

const PlotWindow = () => (
  <div role="dialog" aria-label="Confusion (plotconfusion)" className="absolute top-[273px] left-[826px] flex h-[981px] w-[904px] flex-col overflow-hidden rounded-xl border-2 border-[#454545] bg-[#212121] shadow-[0_16px_50px_rgba(0,0,0,0.75)]">
    <div className="flex h-11 shrink-0 items-center bg-[#2b1a25] pl-[11px] text-[17px] text-white">
      <span className="flex h-[22px] w-[22px] items-center justify-center border-t-2 border-[#9cc4e8] bg-white"><MatlabLogo w={18} /></span>
      <h1 className="ml-2">Confusion (plotconfusion)</h1>
      <div className="mr-[26px] ml-auto flex items-center gap-[54px]">
        <button aria-label="Minimize"><Svg w={16}><path d="M0 8h16" stroke="#fff" strokeWidth="1.500" /></Svg></button>
        <button aria-label="Maximize"><Svg w={16}><rect x="1" y="1" width="14" height="14" rx="1.500" stroke="#fff" strokeWidth="1.700" /></Svg></button>
        <button aria-label="Close"><Svg w={16}><path d="M1 1l14 14M15 1L1 15" stroke="#fff" strokeWidth="1.600" /></Svg></button>
      </div>
    </div>
    <div className="flex h-8 shrink-0 items-center gap-[9px] border-b border-[#8a8a8a] px-2 pt-px font-['Liberation_Sans',sans-serif] text-[18px] text-[#e6e6e6]">
      {["File", "Edit", "View", "Insert", "Tools", "Desktop", "Window", "Help"].map((m) => <button key={m}>{m}</button>)}
      <span className="mr-1.5 ml-auto"><Svg w={11}><path d="M1 1l7 7M10 1v9H2" stroke="#000" strokeWidth="2" /></Svg></span>
    </div>
    <div className="flex pt-14 pl-[53px]">
      <div className="flex w-7 items-center justify-center pb-11 font-['Liberation_Sans',sans-serif] text-[24px] font-bold text-[#d9d9d9]">
        <span className="-rotate-90 whitespace-nowrap">Output Class</span>
      </div>
      <div className="flex flex-col">
        <Matrix />
        <div className="pl-[35px] text-center font-['Liberation_Sans',sans-serif] text-[24px] leading-8 font-bold text-[#d9d9d9]">Target Class</div>
      </div>
    </div>
  </div>
);

/* ---------- bottom bars ---------- */

const StatusBar = () => (
  <footer className="flex h-[47px] shrink-0 border-y border-t-[#7d7d7d] border-b-[#4a4550] bg-[#333] font-['Liberation_Sans',sans-serif] text-[18px]">
    <div className="flex w-[642px] items-center border-r border-[#7d7d7d] pl-3">
      <button aria-label="Panels" className="flex h-[34px] w-[56px] items-center justify-between rounded-md border border-[#8a8a8a] bg-[#262626] pr-1.5 pl-[3px]">
        <Svg w={24}><g fill="#9a9a9a"><rect width="4" height="24" /><rect x="6" width="4" height="24" /><rect x="12" width="4" height="24" /><rect x="18" width="5" height="24" /></g></Svg>
        <Up />
      </button>
    </div>
    <div className="flex flex-1 items-center pl-[13px]">
      <button aria-label="Command Window"><Svg w={34}><rect x="1" y="1" width="32" height="32" rx="1.500" fill="#e6e6e6" stroke="#000" strokeWidth="1.500" /><path d="M1 4h32" stroke="#000" strokeWidth="1.500" /><path d="M4 7l4 4-4 3M8 7l4 4-4 3" stroke="#000" strokeWidth="1.500" /></Svg></button>
      <div className="ml-4 h-8 w-px bg-[#8a8a8a]" />
      <button aria-label="More" className="ml-3"><Dots /></button>
    </div>
    <div className="flex items-center border-l border-[#7d7d7d] pt-0.5 pr-[7px] pl-[45px]">
      <span>Zoom: 100%</span><span className="ml-[18px]">UTF-8</span><span className="ml-[18px]">CRLF</span><span className="ml-[18px]">script</span>
      <span className="ml-[18px]">Ln</span><span className="ml-[9px]">64</span><span className="ml-[9px]">Col</span><span className="ml-[9px]">55</span>
    </div>
  </footer>
);

const Chrome = () => (
  <Svg w={36} vb="0 0 36 36">
    <circle cx="18" cy="18" r="18" fill="#fbc116" />
    <path d="M18 18L2.400 9A18 18 0 0133.600 9z" fill="#e33b2e" /><path d="M2.400 9A18 18 0 0133.600 9H18z" fill="#e33b2e" />
    <path d="M2.400 9A18 18 0 0018 36l7.800-13.500L18 18z" fill="#2e9e4f" />
    <circle cx="18" cy="18" r="8.500" fill="#fff" /><circle cx="18" cy="18" r="6.800" fill="#2f7cf0" />
  </Svg>
);

const TASKS = [
  { n: "Task view", dot: 0, i: <Svg w={36}><rect x="0" y="10" width="27" height="25" rx="2" fill="#6d6d6d" /><rect x="9" y="1" width="27" height="25" rx="2" fill="#f0f0f0" /><rect x="9" y="10" width="18" height="16" fill="#b5b5b5" /></Svg> },
  { n: "File Explorer", dot: 1, i: <Svg w={36}><path d="M0 2q0-1 1-1h11l3 4v6H0z" fill="#e0a008" /><path d="M0 9l16-4h20v30H0z" fill="#ffd04a" /><path d="M6 35v-8q0-3 3-3h18q3 0 3 3v8z" fill="#1479c8" /><path d="M11 29h14" stroke="#0a4f8c" strokeWidth="2" /></Svg> },
  { n: "Chrome", dot: 0, i: <Chrome /> },
  { n: "Outlook", dot: 0, i: <Svg w={36}><path d="M6 13L21 2l15 11v19q0 2-2 2H8q-2 0-2-2z" fill="#1f9bea" /><path d="M36 14v18q0 2-2 2H10l17-12z" fill="#4fdcff" /><path d="M21 2l-8 6 16 12 7-6z" fill="#0a5cb8" /><rect x="0" y="8" width="18" height="20" rx="1.500" fill="#0f6cc4" /><ellipse cx="9" cy="18" rx="4" ry="5" stroke="#fff" strokeWidth="2.500" /></Svg> },
  { n: "Spotify", dot: 1, i: <span className="rounded-full bg-black text-[#1ed760]"><FaSpotify size={34} /></span> },
  { n: "Word", dot: 1, i: <Svg w={36}><rect x="8" y="1" width="28" height="9" fill="#41a5ee" /><rect x="8" y="10" width="28" height="8" fill="#2b7cd3" /><rect x="8" y="18" width="28" height="8" fill="#185abd" /><rect x="8" y="26" width="28" height="9" fill="#103f91" /><rect x="0" y="9" width="18" height="19" rx="1.500" fill="#1a5dbe" /><text x="2" y="24" fontFamily={pct} fontWeight="bold" fontSize="15" fill="#fff">W</text></Svg> },
  { n: "Chrome profile", dot: 1, i: <span className="relative"><Chrome /><span className="absolute -top-2 -right-2 flex h-6 w-6 items-center justify-center rounded-full bg-[#2f6ae0]"><Svg w={14}><path d="M9 0l4 13-5-2-8 1z" fill="#f06a5c" /></Svg></span></span> },
  { n: "Notepad", dot: 1, i: <Svg w={30} h={36}><rect x="1" y="2" width="28" height="30" rx="1" fill="#56c8e0" /><rect x="1" y="31" width="28" height="3" fill="#eee" /><rect x="1" y="33" width="28" height="3" fill="#c06010" /><path d="M6 0v5M12 0v5M18 0v5M24 0v5" stroke="#07627c" strokeWidth="2.500" /><path d="M6 12h18M6 18h18M6 24h18" stroke="#0b7690" strokeWidth="2.500" /></Svg> },
  { n: "Photos", dot: 1, i: <Svg w={34}><rect width="33" height="34" rx="3" fill="#1f7fd8" /><path d="M17 0h13q3 0 3 3v22z" fill="#5b57c0" /><path d="M0 26l14-13q2-2 4 0l15 14v4q0 3-3 3H3q-3 0-3-3z" fill="#43cdf5" /><path d="M8 34l10-13q2-2 4 0l11 11-1 2z" fill="#0f86d8" /><circle cx="24" cy="7" r="3" fill="#fff" /></Svg> },
];

const TaskBar = () => (
  <footer className="grid h-[70px] shrink-0 grid-cols-[1fr_auto_1fr] items-center bg-[linear-gradient(to_right,#1a1f3a_0%,#251c38_9%,#43132a_15%,#221f20_19%,#331d20_25%,#231f22_28%,#201e40_32%,#1c1d52_37%,#24203a_42%,#221f20_46%,#281a3c_52%,#3a1442_60%,#431328_64%,#2c1b22_68%,#431328_74%,#35163f_80%,#2a164a_87%,#231a35_93%,#20202a_97%)]">
    <div />
    <div className="flex h-full items-center pl-3">
      <button aria-label="Start"><Svg w={36}><defs><linearGradient id="win" x1="0" y1="0" x2="1" y2="1"><stop stopColor="#7fe6ff" /><stop offset="1" stopColor="#0a8ff0" /></linearGradient></defs><path d="M1 0h16v17H0V1zM18.500 0H35l1 1v16H18.500zM0 18.500h17V36H1l-1-1zM18.500 18.500H36V35l-1 1H18.500z" fill="url(#win)" /></Svg></button>
      <label className="ml-[18px] flex h-12 w-[330px] items-center rounded-full border border-white/25 bg-white/15 pr-2 pl-4">
        <Svg w={24}><circle cx="11" cy="10" r="8.500" stroke="#eee" strokeWidth="2.500" /><path d="M17 17l5 6" stroke="#eee" strokeWidth="2.800" strokeLinecap="round" /></Svg>
        <input aria-label="Search Windows" placeholder="Search" className="ml-3.5 min-w-0 flex-1 bg-transparent text-[19px] placeholder-[#d0d0dc] outline-none" />
        <Svg w={68} h={38}><path d="M0 30l10-7h48l9 7-9 6H14z" fill="#e8c49a" /><path d="M6 14l12-3 10-3 4 20-12 2-11 2z" fill="#f4f4f4" /><path d="M7 32l24-4v3L10 35z" fill="#3f9a58" /><path d="M10 18l7-2M11 23l7-2M21 14l6-2M22 19l6-2" stroke="#8a8a8a" strokeWidth="1.500" /><path d="M24 18l7-13 4 2-7 13-4 1z" fill="#f6a32c" /><path d="M31 5l1-3 4 2-1 3z" fill="#e8453a" /><path d="M43 28V14c0-12 19-12 19 0v14q0 3-3 3H46q-3 0-3-3z" fill="#0b84f5" /><path d="M48 5q4-7 9 0" stroke="#1466d8" strokeWidth="2" /><path d="M45 24q7-9 15 0v4H45z" fill="#46b3ff" /><path d="M46 28h13" stroke="#d97cf5" strokeWidth="2.500" /></Svg>
      </label>
      <div className="ml-[3px] flex h-full">
        {TASKS.map((t) => (
          <button key={t.n} aria-label={t.n} className="flex w-[66px] flex-col items-center justify-end pb-1.5">
            <span className="flex h-9 items-center">{t.i}</span>
            <span className={`mt-1.5 h-[5px] w-[9px] rounded-full ${t.dot ? "bg-[#a8a0a8]" : ""}`} />
          </button>
        ))}
        <button aria-label="MATLAB" className="mt-1 mb-1 ml-1 flex w-[58px] flex-col items-center justify-end rounded-md border border-white/15 bg-white/5 pb-0.5">
          <MatlabLogo w={38} /><span className="mt-1 h-[5px] w-6 rounded-full bg-[#4cc2ff]" />
        </button>
      </div>
    </div>
    <div className="flex items-center justify-end pr-[30px] text-white">
      <button aria-label="Hidden icons"><Svg w={18} h={12}><path d="M1 10l8-8 8 8" stroke="#fff" strokeWidth="2.200" /></Svg></button>
      <button className="ml-8 text-[17px]">ENG</button>
      <button className="ml-[26px] flex items-center gap-2.5" aria-label="Network, volume, battery">
        <Svg w={26} h={20}><path d="M1 7Q13-4 25 7M5 11q8-8 16 0M9 15q4-4 8 0" stroke="#fff" strokeWidth="2" /><circle cx="13" cy="17.500" r="2" fill="#fff" /></Svg>
        <Svg w={26} h={20}><path d="M1 7h5l6-5v16l-6-5H1z" stroke="#fff" strokeWidth="1.800" /><path d="M15 7q2 3 0 6M18.500 4q4 6 0 12M22 1.500q5 8.500 0 17" stroke="#fff" strokeWidth="1.800" /></Svg>
        <Svg w={26} h={20}><rect x="1.500" y="4" width="20" height="14" rx="3" stroke="#fff" strokeWidth="1.800" /><rect x="4" y="6.500" width="15" height="9" rx="1" fill="#fff" /><path d="M23 8v6h2V8z" fill="#fff" /><path d="M5 0L1 8h4l-2 6 7-8H6l3-6z" fill="#fff" stroke="#2a164a" strokeWidth=".8" /></Svg>
      </button>
      <div className="ml-6 text-right text-[17px] leading-6"><div>3:49 PM</div><div>12/9/2024</div></div>
      <button aria-label="Notifications" className="ml-3.5"><Svg w={22} h={24}><path d="M11 0c5 0 8 3 8 8v6l3 5H0l3-5V8c0-5 3-8 8-8z" fill="#99ebff" /><path d="M8 21h6q-1 3-3 3t-3-3z" fill="#99ebff" /></Svg></button>
    </div>
  </footer>
);

export default function App() {
  return (
    <div className="relative flex h-screen flex-col overflow-hidden bg-[#212121] font-['Open_Sans',sans-serif] text-[#d9d9d9]">
      <div className="flex h-[34px] shrink-0 items-center pl-0.5 text-[17px] text-[#8a8a8a]">
        <MatlabLogo w={24} /><span className="ml-1.5">MATLAB</span>
        <div className="mr-7 ml-auto flex items-center gap-[55px]">
          <button aria-label="Minimize"><Svg w={15}><path d="M0 7.500h15" stroke="#8a8a8a" strokeWidth="1.300" /></Svg></button>
          <button aria-label="Restore"><Svg w={15}><rect x="1" y="4" width="10" height="10" rx="2" stroke="#8a8a8a" strokeWidth="1.300" /><path d="M4 1.500h7q3 0 3 3V11" stroke="#8a8a8a" strokeWidth="1.300" /></Svg></button>
          <button aria-label="Close"><Svg w={15}><path d="M0 0l15 15M15 0L0 15" stroke="#8a8a8a" strokeWidth="1.300" /></Svg></button>
        </div>
      </div>
      <TabBar />
      <Ribbon />
      <AddressBar />
      <div className="flex min-h-0 flex-1 border-t border-[#7d7d7d]">
        <Rail />
        <div className="flex w-[588px] shrink-0 flex-col border-x border-[#7d7d7d]">
          <FilesPanel />
          <WorkspacePanel />
        </div>
        <main className="flex min-w-0 flex-1 flex-col">
          <Editor />
          <CommandWindow />
        </main>
      </div>
      <StatusBar />
      <TaskBar />
      <PlotWindow />
    </div>
  );
}
